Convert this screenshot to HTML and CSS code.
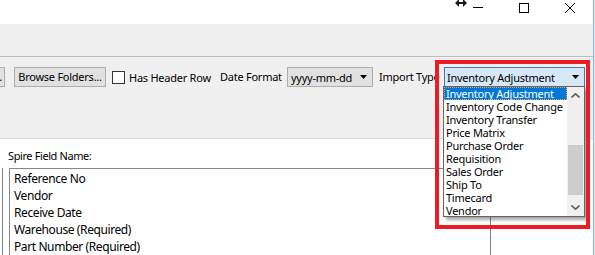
FILE: index.html
```html
<!DOCTYPE html>
<html lang="en">
    <head>
        <meta charset="UTF-8" />
        <meta name="viewport" content="width=device-width, initial-scale=1.0" />
        <title>Spire Import</title>
        <link rel="stylesheet" href="styles.css">
    </head>
    <body>
        <div class="window">
            <div class="titlebar">
                <svg class="resize-cursor" width="12" height="7" viewBox="0 0 12 7">
                    <polygon points="0,3 4,-1 4,2 8,2 8,-1 12,3 8,7 8,4 4,4 4,7" fill="#1a1a1a" />
                </svg>
                <div class="caption-btn">
                    <svg width="10" height="10" viewBox="0 0 10 10">
                        <line x1="0" y1="4.5" x2="10" y2="4.5" stroke="#000" stroke-width="1" />
                    </svg>
                </div>
                <div class="caption-btn">
                    <svg width="10" height="10" viewBox="0 0 10 10">
                        <rect x="0.5" y="0.5" width="9" height="9" fill="none" stroke="#000" stroke-width="1" />
                    </svg>
                </div>
                <div class="caption-btn">
                    <svg width="10" height="10" viewBox="0 0 10 10">
                        <path d="M0 0 L10 10 M10 0 L0 10" stroke="#000" stroke-width="1" />
                    </svg>
                </div>
            </div>

            <div class="ribbon"></div>

            <div class="toolbar">
                <button class="btn btn-cut">Browse Files...</button>
                <button class="btn btn-folders">Browse Folders...</button>
                <label class="check">
                    <span class="check-box"></span>
                    Has Header Row
                </label>
                <span class="field-label date-label">Date Format</span>
                <div class="combo date-combo">
                    <span>yyyy-mm-dd</span>
                    <svg class="caret" width="7" height="4" viewBox="0 0 7 4">
                        <polygon points="0,0 7,0 3.5,4" fill="#000" />
                    </svg>
                </div>
                <span class="field-label type-label">Import Type</span>
                <div class="combo combo-focus">
                    <span>Inventory Adjustment</span>
                    <svg class="caret" width="7" height="4" viewBox="0 0 7 4">
                        <polygon points="0,0 7,0 3.5,4" fill="#000" />
                    </svg>
                </div>
            </div>

            <div class="mapping">
                <div class="pane-cut"></div>
                <div class="pane">
                    <div class="pane-title">Spire Field Name:</div>
                    <ul class="listbox">
                        <li>Reference No</li>
                        <li>Vendor</li>
                        <li>Receive Date</li>
                        <li>Warehouse (Required)</li>
                        <li>Part Number (Required)</li>
                    </ul>
                </div>
            </div>

            <!-- open import type list -->
            <div class="dropdown">
                <ul class="dropdown-items">
                    <li class="selected">Inventory Adjustment</li>
                    <li>Inventory Code Change</li>
                    <li>Inventory Transfer</li>
                    <li>Price Matrix</li>
                    <li>Purchase Order</li>
                    <li>Requisition</li>
                    <li>Sales Order</li>
                    <li>Ship To</li>
                    <li>Timecard</li>
                    <li>Vendor</li>
                </ul>
                <div class="scrollbar">
                    <div class="scroll-btn">
                        <svg width="9" height="5" viewBox="0 0 9 5">
                            <polyline points="0.5,4.5 4.5,0.8 8.5,4.5" fill="none" stroke="#606060" stroke-width="1.6" />
                        </svg>
                    </div>
                    <div class="scroll-track">
                        <div class="scroll-thumb"></div>
                    </div>
                    <div class="scroll-btn">
                        <svg width="9" height="5" viewBox="0 0 9 5">
                            <polyline points="0.5,0.5 4.5,4.2 8.5,0.5" fill="none" stroke="#606060" stroke-width="1.6" />
                        </svg>
                    </div>
                </div>
            </div>

            <!-- highlight box drawn over the screenshot -->
            <div class="annotation"></div>
        </div>
    </body>
</html>
```

FILE: styles.css
```css
* {
    box-sizing: border-box;
}
body {
    margin: 0;
    width: 595px;
    height: 255px;
    overflow: hidden;
    background-color: #e6e6e6;
    font-family: "Noto Sans", "Segoe UI", sans-serif;
    font-size: 11px;
    letter-spacing: -0.25px;
    color: #000;
}
.window {
    position: relative;
    width: 594px;
    height: 255px;
    background-color: #f0f0f0;
    border-right: 1px solid #86b9e8;
}
.titlebar {
    height: 24px;
    background-color: #fff;
    display: flex;
    justify-content: flex-end;
}
.resize-cursor {
    position: absolute;
    left: 455px;
    top: 0;
}
.caption-btn {
    width: 46px;
    display: flex;
    justify-content: center;
    align-items: flex-start;
    padding-top: 3px;
}
.ribbon {
    height: 33px;
    border-bottom: 1px solid #bdbdbd;
}
.toolbar {
    height: 82px;
    padding-top: 10px;
    border-bottom: 1px solid #dadada;
    display: flex;
    align-items: flex-start;
}
.btn {
    height: 20px;
    margin: 0 6px 0 0;
    padding: 0;
    border: 1px solid #adadad;
    background-color: #e1e1e1;
    font: inherit;
    letter-spacing: inherit;
    line-height: 18px;
    color: #000;
    white-space: nowrap;
}
.btn-cut {
    width: 80px;
    margin-left: -75px;
    margin-right: 9px;
    text-align: right;
    padding-right: 2px;
    overflow: hidden;
}
.btn-folders {
    width: 92px;
}
.check {
    width: 108px;
    height: 20px;
    display: flex;
    align-items: center;
    white-space: nowrap;
}
.check-box {
    width: 13px;
    height: 13px;
    margin-right: 4px;
    border: 1px solid #333;
    background-color: #fff;
}
.field-label {
    height: 20px;
    line-height: 20px;
    white-space: nowrap;
}
.date-label {
    width: 67px;
}
.type-label {
    width: 65px;
    overflow: hidden;
}
.combo {
    height: 20px;
    border: 1px solid #adadad;
    background-color: #e1e1e1;
    display: flex;
    align-items: center;
    justify-content: space-between;
    padding: 0 5px 0 3px;
    white-space: nowrap;
}
.date-combo {
    width: 86px;
    margin-right: 6px;
}
.combo-focus {
    width: 141px;
    padding-left: 2px;
    border-color: #3c7fb1;
    background-color: #d6e8f8;
}
.mapping {
    height: 116px;
    background-color: #fff;
    display: flex;
}
.pane-cut {
    width: 3px;
    margin-top: 29px;
    border-right: 1px solid #828790;
}
.pane {
    margin-left: 5px;
}
.pane-title {
    padding-top: 9px;
    line-height: 16px;
    letter-spacing: -0.4px;
}
.listbox {
    width: 482px;
    height: 90px;
    margin: 4px 0 0 1px;
    padding: 1px 0 0 4px;
    list-style: none;
    border: 1px solid #828790;
    border-bottom: none;
    font-size: 12px;
    letter-spacing: -0.4px;
    line-height: 17px;
}
.dropdown {
    position: absolute;
    left: 443px;
    top: 86px;
    width: 142px;
    height: 131px;
    border: 1px solid #646464;
    background-color: #fff;
    box-shadow: 3px 3px 3px rgba(0, 0, 0, 0.35);
    display: flex;
}
.dropdown-items {
    flex: 1;
    margin: 0;
    padding: 0;
    list-style: none;
}
.dropdown-items li {
    height: 13px;
    line-height: 13px;
    padding-left: 2px;
    white-space: nowrap;
}
.dropdown-items li.selected {
    background-color: #0078d7;
    color: #fff;
    outline: 1px dotted #f5a54a;
    outline-offset: -1px;
}
.scrollbar {
    width: 17px;
    background-color: #f0f0f0;
    display: flex;
    flex-direction: column;
}
.scroll-btn {
    height: 17px;
    display: flex;
    align-items: center;
    justify-content: center;
}
.scroll-track {
    flex: 1;
    padding-top: 41px;
}
.scroll-thumb {
    height: 50px;
    margin: 0 1px;
    background-color: #cdcdcd;
}
.annotation {
    position: absolute;
    left: 435px;
    top: 60px;
    width: 155px;
    height: 169px;
    border: 4px solid #ed1c24;
}
```
